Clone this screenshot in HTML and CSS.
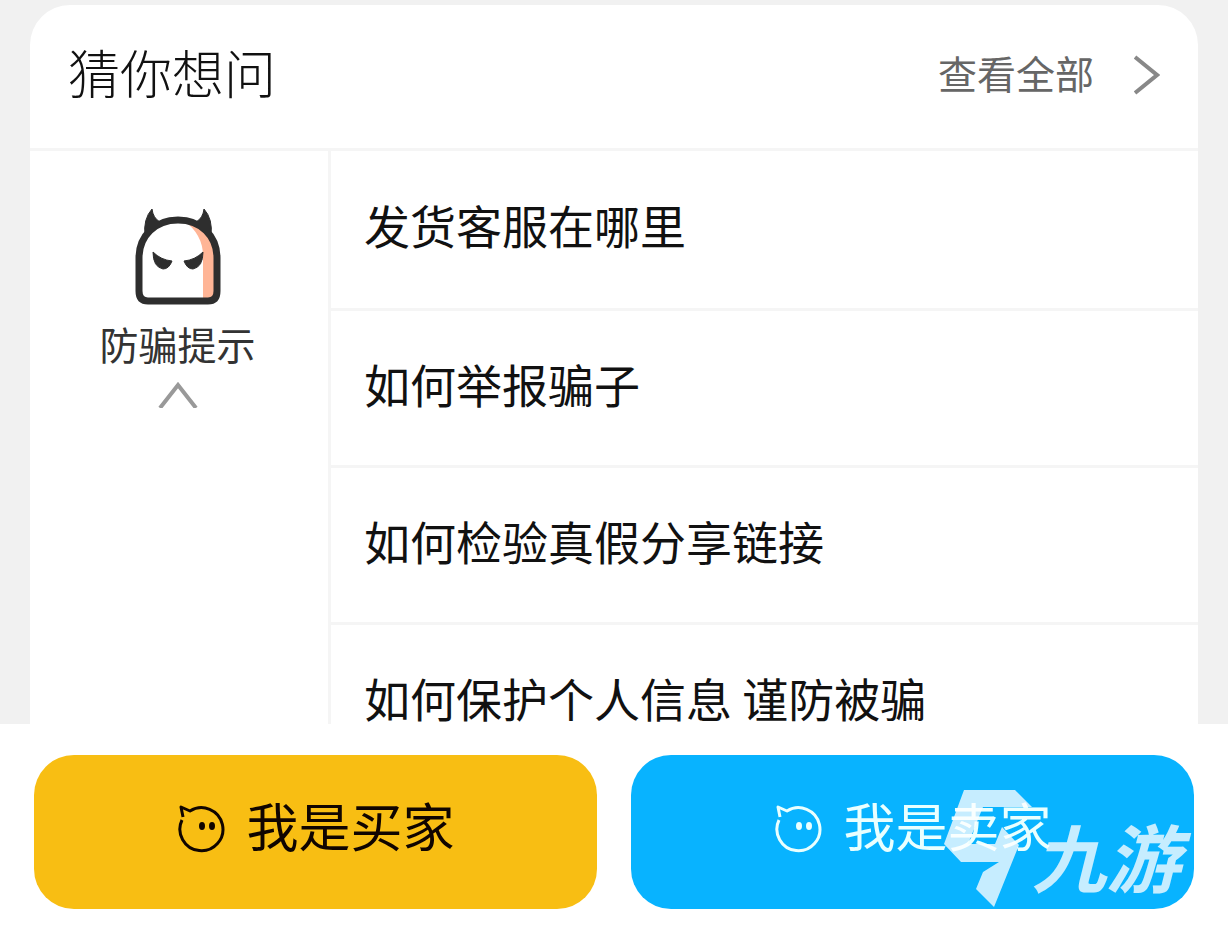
FILE: index.html
```html
<!DOCTYPE html>
<html lang="zh-CN">
<head>
    <meta charset="UTF-8">
    <meta name="viewport" content="width=device-width, initial-scale=1.0">
    <title>客服中心</title>
    <link rel="stylesheet" href="styles.css">
</head>
<body>
    <main class="content">
        <section class="card">
            <header class="card-header">
                <h1 class="card-title">猜你想问</h1>
                <a class="view-all" href="#">
                    查看全部
                    <svg class="arrow-right" viewBox="0 0 26 40" aria-hidden="true">
                        <path d="M1 2 L23 20 L1 38" />
                    </svg>
                </a>
            </header>

            <div class="card-body">
                <button class="category" type="button">
                    <svg class="category-icon" viewBox="0 0 86 98" aria-hidden="true">
                        <path class="shade" d="M48 12 Q68 26 68 48 V92 H81 V48 Q80 18 48 12 Z" />
                        <path class="outline" d="M4 50 C4 28 20 12 43 12 C66 12 82 28 82 50 V83 Q82 93 73 93 H13 Q4 93 4 83 Z" />
                        <path class="solid" d="M17 1 Q18 10 25 14 L10 28 Q8 11 17 1 Z M69 1 Q68 10 61 14 L76 28 Q78 11 69 1 Z" />
                        <path class="solid" d="M18 44 Q26 52 37 53 Q34 61 28 61 Q18 59 18 44 Z M68 44 Q60 52 49 53 Q52 61 58 61 Q68 59 68 44 Z" />
                    </svg>
                    <span class="category-label">防骗提示</span>
                    <svg class="arrow-up" viewBox="0 0 40 26" aria-hidden="true">
                        <path d="M2 26 L20 3 L38 26" />
                    </svg>
                </button>

                <ul class="question-list">
                    <li><a href="#">发货客服在哪里</a></li>
                    <li><a href="#">如何举报骗子</a></li>
                    <li><a href="#">如何检验真假分享链接</a></li>
                    <li><a href="#">如何保护个人信息 谨防被骗</a></li>
                </ul>
            </div>
        </section>
    </main>

    <footer class="actions">
        <button class="action buyer" type="button">
            <svg class="face" viewBox="0 0 48 48" aria-hidden="true">
                <path d="M4 15 A21.5 21.5 0 1 0 12 6 L3 2 L5 12" />
                <ellipse cx="24" cy="21" rx="3" ry="4" />
                <ellipse cx="34" cy="21" rx="3" ry="4" />
            </svg>
            我是买家
        </button>
        <button class="action seller" type="button">
            <svg class="face" viewBox="0 0 48 48" aria-hidden="true">
                <path d="M4 15 A21.5 21.5 0 1 0 12 6 L3 2 L5 12" />
                <ellipse cx="24" cy="21" rx="3" ry="4" />
                <ellipse cx="34" cy="21" rx="3" ry="4" />
            </svg>
            我是卖家
        </button>

        <div class="watermark">
            <svg class="watermark-logo" viewBox="0 0 88 117" aria-hidden="true">
                <path d="M20 0 H71 L88 17 H39 L24 54 H51 L58 37 L75 55 L50 117 L32 99 L39 82 L55 72 H17 L0 54 Z" />
            </svg>
            <span class="watermark-text">九游</span>
        </div>
    </footer>
</body>
</html>
```
FILE: styles.css
```css
* {
    margin: 0;
    padding: 0;
    box-sizing: border-box;
}

body {
    font-family: "Noto Sans CJK SC", sans-serif;
    background: #fff;
    height: 100vh;
    display: flex;
    flex-direction: column;
    color: #111;
}

a {
    color: inherit;
    text-decoration: none;
}

button {
    font-family: inherit;
    color: inherit;
    border: none;
    background: none;
    cursor: pointer;
}

svg {
    display: block;
    fill: none;
}

.content {
    flex: 1;
    min-height: 0;
    overflow: hidden;
    padding: 5px 30px 0;
    background: #f1f1f1;
}

.card {
    background: #fff;
    border-radius: 40px 40px 0 0;
}

.card-header {
    display: flex;
    align-items: center;
    justify-content: space-between;
    height: 146px;
    padding: 0 38px 10px;
    border-bottom: 3px solid #f5f5f5;
}

.card-title {
    font-size: 52px;
    font-weight: 300;
    line-height: 60px;
}

.view-all {
    display: flex;
    align-items: center;
    gap: 40px;
    font-size: 39px;
    line-height: 48px;
    color: #666;
}

.arrow-right {
    width: 26px;
    height: 40px;
    margin-top: 6px;
    stroke: #888;
    stroke-width: 4;
}

.card-body {
    display: flex;
}

.category {
    display: flex;
    flex-direction: column;
    align-items: center;
    width: 298px;
    padding: 57px 3px 0 0;
    color: #333;
}

.category-icon {
    width: 86px;
    height: 98px;
}

.category-icon .shade {
    fill: #ffb596;
}

.category-icon .outline {
    stroke: #2e2e2e;
    stroke-width: 7;
}

.category-icon .solid {
    fill: #2e2e2e;
    stroke: #2e2e2e;
    stroke-width: 1;
}

.category-label {
    margin-top: 13px;
    font-size: 39px;
    line-height: 48px;
}

.arrow-up {
    width: 40px;
    height: 26px;
    margin-top: 15px;
    stroke: #999;
    stroke-width: 4;
}

.question-list {
    flex: 1;
    list-style: none;
    border-left: 3px solid #f5f5f5;
}

.question-list a {
    display: block;
    height: 157px;
    padding: 43px 33px;
    font-size: 46px;
    line-height: 60px;
    white-space: nowrap;
}

.question-list li + li a {
    padding-top: 42px;
    border-top: 3px solid #f5f5f5;
}

.actions {
    position: relative;
    display: flex;
    gap: 34px;
    padding: 31px 34px 29px;
}

.action {
    flex: 1;
    display: flex;
    align-items: center;
    justify-content: center;
    gap: 20px;
    height: 154px;
    padding: 0 0 15px 2px;
    border-radius: 40px;
    font-size: 52px;
    line-height: 60px;
}

.buyer {
    background: #f8be13;
    color: #100500;
}

.seller {
    background: #08b3ff;
    color: #e9ffff;
}

.face {
    width: 48px;
    height: 48px;
    margin-top: 9px;
    stroke: currentColor;
    stroke-width: 3;
    stroke-linejoin: round;
}

.face ellipse {
    fill: currentColor;
    stroke: none;
}

.watermark {
    position: absolute;
    right: 48px;
    bottom: 31px;
    display: flex;
    align-items: center;
    color: #fff;
    opacity: 0.77;
    pointer-events: none;
}

.watermark-logo {
    width: 88px;
    height: 117px;
    fill: currentColor;
}

.watermark-text {
    margin-top: 12px;
    font-size: 74px;
    font-style: italic;
    font-weight: 700;
    line-height: 80px;
}
```
